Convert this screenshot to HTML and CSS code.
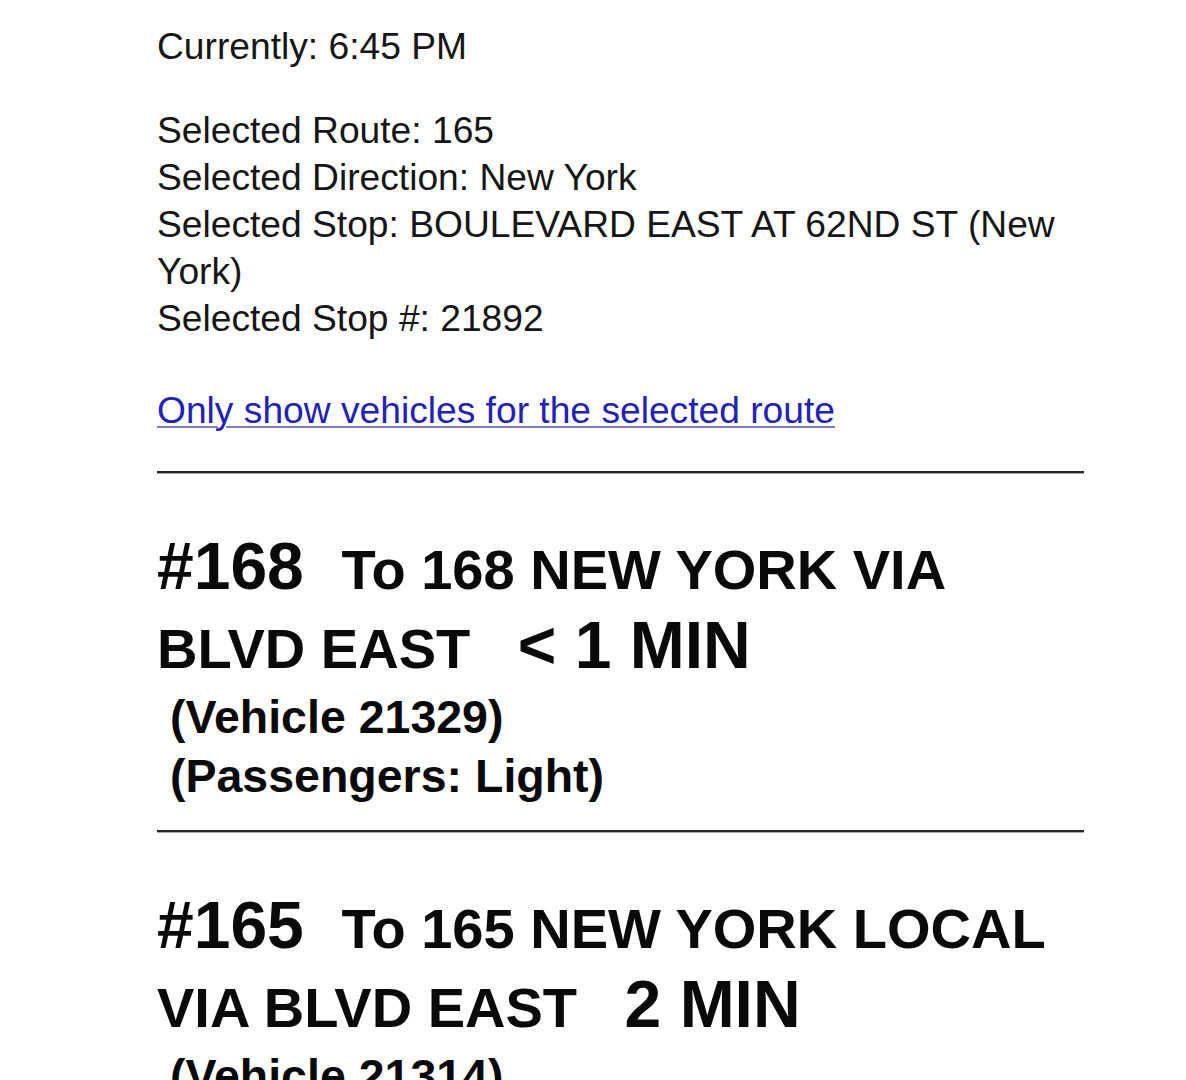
FILE: index.html
```html
<!DOCTYPE html>
<html lang="en">
<head>
    <meta charset="UTF-8">
    <meta name="viewport" content="width=device-width, initial-scale=1.0">
    <title>Bus Arrivals</title>
    <link rel="stylesheet" href="styles.css">
</head>
<body>

    <div class="page">
        <p class="now">Currently: 6:45 PM</p>

        <p class="selected">
            Selected Route: 165<br>
            Selected Direction: New York<br>
            Selected Stop: BOULEVARD EAST AT 62ND ST (New York)<br>
            Selected Stop #: 21892
        </p>

        <p class="filter"><a href="#">Only show vehicles for the selected route</a></p>

        <hr>

        <!-- Arrival 1 -->
        <div class="arrival">
            <h3><span class="route">#168</span> To 168 NEW YORK VIA BLVD EAST <span class="eta">&lt; 1 MIN</span></h3>
            <p class="vehicle">
                (Vehicle 21329)<br>
                (Passengers: Light)
            </p>
        </div>

        <hr>

        <!-- Arrival 2 -->
        <div class="arrival">
            <h3><span class="route">#165</span> To 165 NEW YORK LOCAL VIA BLVD EAST <span class="eta">2 MIN</span></h3>
            <p class="vehicle">
                (Vehicle 21314)<br>
                (Passengers: Light)
            </p>
        </div>
    </div>

</body>
</html>
```

FILE: styles.css
```css
* {
    margin: 0;
    padding: 0;
    box-sizing: border-box;
}

body {
    font-family: "Liberation Sans", Arial, sans-serif;
    background-color: #ffffff;
    color: #161616;
    margin: 0;
}

.page {
    width: 927px;
    margin-left: 157px;
    padding-top: 23px;
}

.now,
.selected,
.filter {
    font-size: 37.2px;
    line-height: 47px;
}

.selected {
    margin-top: 37px;
}

.filter {
    margin-top: 45px;
}

.filter a {
    color: #2222b4;
    text-decoration: underline;
    text-decoration-color: #7d7dc8;
    text-decoration-thickness: 2px;
    text-underline-offset: 3px;
}

hr {
    border: none;
    border-top: 2px solid #262626;
    border-bottom: 1px solid #a8a8a8;
    margin-top: 37px;
}

.arrival + hr {
    margin-top: 24px;
}

.arrival h3 {
    margin-top: 56px;
    font-size: 56px;
    line-height: 79px;
    font-weight: bold;
    color: #0a0a0a;
}

.route,
.eta {
    font-size: 66px;
    line-height: 1;
}

.route {
    margin-right: 22px;
}

.eta {
    margin-left: 32px;
}

.vehicle {
    font-size: 46.5px;
    line-height: 59px;
    font-weight: bold;
    color: #0a0a0a;
    padding-left: 13px;
}
```
